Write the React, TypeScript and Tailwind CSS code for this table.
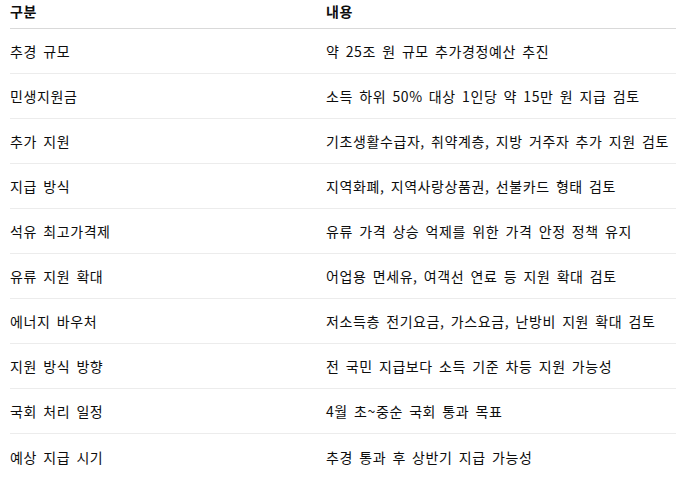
const rows: [string, string][] = [
  ["추경 규모", "약 25조 원 규모 추가경정예산 추진"],
  ["민생지원금", "소득 하위 50% 대상 1인당 약 15만 원 지급 검토"],
  ["추가 지원", "기초생활수급자, 취약계층, 지방 거주자 추가 지원 검토"],
  ["지급 방식", "지역화폐, 지역사랑상품권, 선불카드 형태 검토"],
  ["석유 최고가격제", "유류 가격 상승 억제를 위한 가격 안정 정책 유지"],
  ["유류 지원 확대", "어업용 면세유, 여객선 연료 등 지원 확대 검토"],
  ["에너지 바우처", "저소득층 전기요금, 가스요금, 난방비 지원 확대 검토"],
  ["지원 방식 방향", "전 국민 지급보다 소득 기준 차등 지원 가능성"],
  ["국회 처리 일정", "4월 초~중순 국회 통과 목표"],
  ["예상 지급 시기", "추경 통과 후 상반기 지급 가능성"],
];

export default function App() {
  return (
    <div
      className="h-[480px] w-[676px] overflow-hidden bg-white pl-[10px] text-[14px] tracking-[0.6px] [word-spacing:2.5px] text-[#0d0d0d]"
      style={{ fontFamily: '"Noto Sans CJK KR", "Noto Sans", sans-serif' }}
    >
      <div className="grid h-[29px] grid-cols-[316px_1fr] border-b border-[#d9d9d9] pt-[1px] font-bold leading-[20px]">
        <div>구분</div>
        <div>내용</div>
      </div>
      {rows.map(([k, v], i) => (
        <div
          key={k}
          className={
            "grid h-[45px] grid-cols-[316px_1fr] items-center leading-[20px] " +
            (i < rows.length - 1 ? "border-b border-[#ececec]" : "")
          }
        >
          <div>{k}</div>
          <div>{v}</div>
        </div>
      ))}
    </div>
  );
}
